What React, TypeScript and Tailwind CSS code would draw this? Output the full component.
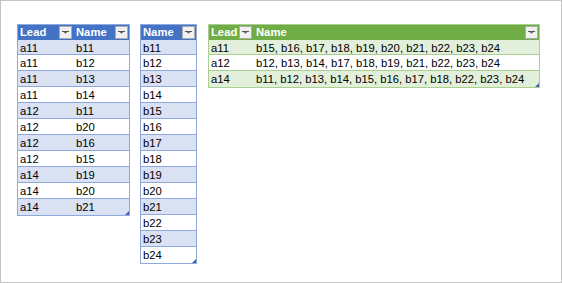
import React from 'react';

type Theme = {
  head: string;
  band: string;
  border: string;
  divide: string;
};

const blue: Theme = {
  head: 'bg-[#4472c4]',
  band: 'bg-[#d9e1f2]',
  border: 'border-[#8ea9db]',
  divide: 'divide-[#8ea9db]',
};

const green: Theme = {
  head: 'bg-[#70ad47]',
  band: 'bg-[#e2efda]',
  border: 'border-[#a9d08e]',
  divide: 'divide-[#a9d08e]',
};

const FilterButton: React.FC = () => (
  <div className="w-[13px] h-[13px] mr-[1px] shrink-0 bg-[#f0f0f0] border border-[#acacac] flex items-center justify-center">
    <svg width="7" height="3" viewBox="0 0 7 3">
      <rect x="0" y="0" width="7" height="1" fill="#555" />
      <rect x="2" y="1" width="3" height="1" fill="#777" />
      <rect x="3" y="2" width="1" height="1" fill="#999" />
    </svg>
  </div>
);

type Col = { label: string; width: string; filter: boolean };

const Table: React.FC<{ theme: Theme; cols: Col[]; rows: string[][] }> = ({ theme, cols, rows }) => (
  <div className={`relative border ${theme.border} self-start`}>
    {/* header */}
    <div className={`flex h-[15px] ${theme.head}`}>
      {cols.map((c) => (
        <div key={c.label} className={`${c.width} flex items-center justify-between pl-[2px]`}>
          <span className="text-white font-bold leading-[15px]">{c.label}</span>
          {c.filter && <FilterButton />}
        </div>
      ))}
    </div>
    {/* body */}
    <div className={`divide-y ${theme.divide}`}>
      {rows.map((r, i) => (
        <div key={i} className={`flex h-[16px] first:h-[15px] ${i % 2 === 0 ? theme.band : 'bg-white'}`}>
          {r.map((v, j) => (
            <div key={j} className={`${cols[j].width} pl-[2px] pt-[2px] leading-[13px] whitespace-nowrap text-black`}>
              {v}
            </div>
          ))}
        </div>
      ))}
    </div>
    {/* resize handle */}
    <div className="absolute right-0 bottom-0 w-[4px] h-[4px] bg-[#3f5fb5] [clip-path:polygon(100%_0,100%_100%,0_100%)]" />
  </div>
);

const leadRows = [
  ['a11', 'b11'], ['a11', 'b12'], ['a11', 'b13'], ['a11', 'b14'],
  ['a12', 'b11'], ['a12', 'b20'], ['a12', 'b16'], ['a12', 'b15'],
  ['a14', 'b19'], ['a14', 'b20'], ['a14', 'b21'],
];

const nameRows = ['b11', 'b12', 'b13', 'b14', 'b15', 'b16', 'b17', 'b18', 'b19', 'b20', 'b21', 'b22', 'b23', 'b24'].map((n) => [n]);

const groupRows = [
  ['a11', 'b15, b16, b17, b18, b19, b20, b21, b22, b23, b24'],
  ['a12', 'b12, b13, b14, b17, b18, b19, b21, b22, b23, b24'],
  ['a14', 'b11, b12, b13, b14, b15, b16, b17, b18, b22, b23, b24'],
];

export default function App() {
  return (
    <div
      className="w-[562px] h-[283px] bg-white border border-[#c4c4c4] flex items-start pl-[16px] pt-[23px] text-[11.25px]"
      style={{ fontFamily: '"Liberation Sans", Arial, sans-serif' }}
    >
      <Table
        theme={blue}
        cols={[
          { label: 'Lead', width: 'w-[55px]', filter: true },
          { label: 'Name', width: 'w-[56px] pl-[3px]', filter: true },
        ]}
        rows={leadRows}
      />
      <div className="ml-[10px]">
        <Table theme={blue} cols={[{ label: 'Name', width: 'w-[55px]', filter: true }]} rows={nameRows} />
      </div>
      <div className="ml-[11px]">
        <Table
          theme={green}
          cols={[
            { label: 'Lead', width: 'w-[44px]', filter: true },
            { label: 'Name', width: 'w-[286px] pl-[3px]', filter: true },
          ]}
          rows={groupRows}
        />
      </div>
    </div>
  );
}
